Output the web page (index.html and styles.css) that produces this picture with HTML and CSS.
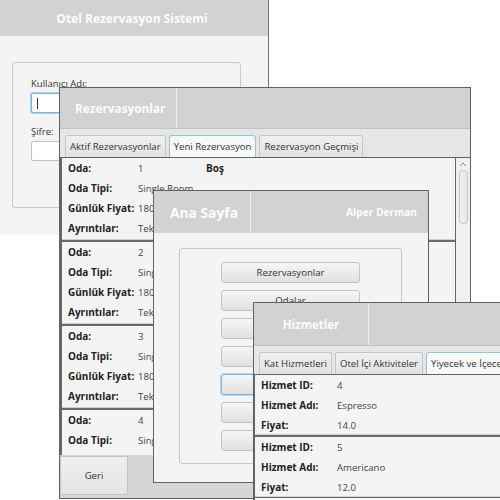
FILE: index.html
```html
<!DOCTYPE html>
<html>
<head>
<meta charset="utf-8">
<link rel="stylesheet" href="styles.css">
</head>
<body>
<div class="desk">

  <section class="win login">
    <header class="login-head">Otel Rezervasyon Sistemi</header>
    <div class="login-body">
      <div class="fieldset login-box">
        <label class="lbl">Kullanıcı Adı:</label>
        <div class="input focus"><span class="caret"></span></div>
        <label class="lbl lbl2">Şifre:</label>
        <div class="input"></div>
      </div>
    </div>
  </section>

  <section class="win rez">
    <header class="head rez-head"><div class="head-title t-rez">Rezervasyonlar</div><div class="head-rest"></div></header>
    <nav class="tabs">
      <span class="tab">Aktif Rezervasyonlar</span>
      <span class="tab sel">Yeni Rezervasyon</span>
      <span class="tab">Rezervasyon Geçmişi</span>
    </nav>
    <div class="rez-main">
      <div class="list">
        <div class="rec">
          <div class="row"><b>Oda:</b><span>1</span><b class="state">Boş</b></div>
          <div class="row"><b>Oda Tipi:</b><span>Single Room</span></div>
          <div class="row"><b>Günlük Fiyat:</b><span>180.0</span></div>
          <div class="row"><b>Ayrıntılar:</b><span>Tek kişilik oda</span></div>
        </div>
        <div class="rec">
          <div class="row"><b>Oda:</b><span>2</span></div>
          <div class="row"><b>Oda Tipi:</b><span>Single Room</span></div>
          <div class="row"><b>Günlük Fiyat:</b><span>180.0</span></div>
          <div class="row"><b>Ayrıntılar:</b><span>Tek kişilik oda</span></div>
        </div>
        <div class="rec">
          <div class="row"><b>Oda:</b><span>3</span></div>
          <div class="row"><b>Oda Tipi:</b><span>Single Room</span></div>
          <div class="row"><b>Günlük Fiyat:</b><span>180.0</span></div>
          <div class="row"><b>Ayrıntılar:</b><span>Tek kişilik oda</span></div>
        </div>
        <div class="rec last">
          <div class="row"><b>Oda:</b><span>4</span></div>
          <div class="row"><b>Oda Tipi:</b><span>Single Room</span></div>
        </div>
      </div>
      <div class="scroll">
        <svg class="arrow" width="8" height="5" viewBox="0 0 8 5"><path d="M1 4 L4 1 L7 4" fill="none" stroke="#888" stroke-width="1"/></svg>
        <div class="thumb"></div>
      </div>
    </div>
    <footer class="rez-foot"><button class="btn geri">Geri</button></footer>
  </section>

  <section class="win ana">
    <header class="head ana-head"><div class="head-title t-ana">Ana Sayfa</div><div class="head-rest user">Alper Derman</div></header>
    <div class="ana-body">
      <div class="fieldset menu">
        <button class="btn mbtn">Rezervasyonlar</button>
        <button class="btn mbtn">Odalar</button>
        <button class="btn mbtn">Hizmetler</button>
        <button class="btn mbtn">Müşteriler</button>
        <button class="btn mbtn focus">Personel</button>
        <button class="btn mbtn">Raporlar</button>
        <button class="btn mbtn">Çıkış</button>
      </div>
    </div>
  </section>

  <section class="win hiz">
    <header class="head hiz-head"><div class="head-title t-hiz">Hizmetler</div><div class="head-rest"></div></header>
    <nav class="tabs hiz-tabs">
      <span class="tab">Kat Hizmetleri</span>
      <span class="tab">Otel İçi Aktiviteler</span>
      <span class="tab sel">Yiyecek ve İçecekler</span>
    </nav>
    <div class="list hlist">
      <div class="rec hrec">
        <div class="row"><b>Hizmet ID:</b><span>4</span></div>
        <div class="row"><b>Hizmet Adı:</b><span>Espresso</span></div>
        <div class="row"><b>Fiyat:</b><span>14.0</span></div>
      </div>
      <div class="rec hrec">
        <div class="row"><b>Hizmet ID:</b><span>5</span></div>
        <div class="row"><b>Hizmet Adı:</b><span>Americano</span></div>
        <div class="row"><b>Fiyat:</b><span>12.0</span></div>
      </div>
    </div>
  </section>

</div>
</body>
</html>
```
FILE: styles.css
```css
* { box-sizing: border-box; }
html, body { margin: 0; padding: 0; background: #ffffff; }
body { font-family: "Open Sans", "Noto Sans", sans-serif; font-size: 10px; color: #333; }
.desk { position: relative; width: 500px; height: 500px; overflow: hidden; }

.win { position: absolute; background: #f4f4f4; display: flex; flex-direction: column; overflow: hidden; }

/* login window */
.login { left: 0; top: 0; width: 269px; height: 235px; border-right: 1px solid #6b7170; }
.login-head { height: 36px; background: #d2d2d2; color: #fcfcfc; font-weight: 700; font-size: 12px; display: flex; align-items: center; justify-content: center; padding-right: 4px; }
.login-body { flex: 1; padding: 26px 27px 0 12px; }
.fieldset { border: 1px solid #c9c9c9; border-radius: 3px; background: #f4f4f4; }
.login-box { height: 146px; padding: 14px 18px; display: flex; flex-direction: column; }
.lbl { font-size: 9.5px; color: #333; line-height: 14px; }
.lbl2 { margin-top: 12px; }
.input { height: 20px; margin-top: 2px; background: #fff; border: 1px solid #c2c2c2; border-radius: 2px; position: relative; }
.input.focus { border: 1px solid #7ab6d8; box-shadow: 0 0 0 1px #a9d2ea; }
.caret { position: absolute; left: 5px; top: 4px; width: 1px; height: 11px; background: #333; }

/* header shared */
.head { display: flex; height: 41px; background: #d2d2d2; flex-shrink: 0; }
.head-title { color: #fcfcfc; font-weight: 700; display: flex; align-items: center; border-right: 1px solid #f2f2f2; }
.head-rest { flex: 1; }

/* reservations window */
.rez { left: 59px; top: 87px; width: 412px; height: 412px; border: 1px solid #5d6462; background: #d6d6d6; }
.rez-head { height: 40px; }
.t-rez { width: 117px; padding-left: 15px; font-size: 11.8px; }
.tabs { height: 29px; background: #e6e6e6; border-top: 1px solid #c2c2c2; display: flex; align-items: flex-end; gap: 3px; padding: 0 0 0 5px; flex-shrink: 0; }
.tab { height: 22px; padding: 0 4px; display: flex; align-items: center; border: 1px solid #c4c4c4; border-bottom: none; border-radius: 3px 3px 0 0; background: linear-gradient(#f0f0f0, #e2e2e2); color: #333; font-size: 9.6px; white-space: nowrap; }
.tab.sel { background: #f8f8f8; border: 1px solid #93c3df; border-bottom: none; }
.rez-main { display: flex; height: 298px; background: #f4f4f4; border-top: 1px solid #5d6462; flex-shrink: 0; }
.list { flex: 1; background: #f4f4f4; border-left: 2px solid #666; border-right: 1px solid #666; overflow: hidden; }
.rec { height: 84px; border-top: 1px solid #6b6b6b; border-bottom: 1px solid #6b6b6b; box-shadow: inset 0 -1px 0 #d0d0d0; padding: 0 0 0 6px; }
.rec:first-child { border-top: none; height: 83px; }
.rec.last { border-bottom: none; box-shadow: none; }
.row { height: 20px; display: flex; align-items: center; white-space: nowrap; }
.row b { width: 70px; font-weight: 700; color: #222; font-size: 10px; }
.row span { width: 68px; color: #444; font-size: 9.6px; }
.row .state { width: auto; }
.scroll { width: 14px; background: #f0f0f0; display: flex; flex-direction: column; align-items: center; padding-top: 4px; gap: 3px; }
.thumb { width: 9px; height: 54px; border: 1px solid #c6c6c6; border-radius: 4px; background: linear-gradient(90deg, #f2f2f2, #e4e4e4); }
.rez-foot { flex: 1; display: flex; background: #d6d6d6; padding: 1px 0 0 0; }
.btn { font-family: "Open Sans", "Noto Sans", sans-serif; font-size: 9.6px; color: #333; border: 1px solid #c4c4c4; border-radius: 3px; background: linear-gradient(#f6f6f6, #e0e0e0); }
.geri { width: 68px; height: 39px; border-radius: 0; background: linear-gradient(#efefef, #e4e4e4); }

/* main window */
.ana { left: 153px; top: 190px; width: 276px; height: 293px; border: 1px solid #5d6462; }
.ana-head { height: 42px; }
.t-ana { width: 97px; padding-left: 16px; font-size: 13.8px; }
.user { color: #fcfcfc; font-weight: 700; font-size: 10.2px; display: flex; align-items: center; justify-content: flex-end; padding-right: 11px; }
.ana-body { padding: 15px 26px 0 25px; }
.menu { height: 216px; padding: 13px 0 0 41px; display: flex; flex-direction: column; gap: 7px; }
.mbtn { width: 139px; height: 21px; padding: 0; }
.mbtn.focus { border: 1px solid #7ab6d8; box-shadow: 0 0 0 1px #b5d8ec; }

/* services window */
.hiz { left: 253px; top: 302px; width: 260px; height: 210px; border: 1px solid #5d6462; }
.hiz-head { height: 42px; }
.t-hiz { width: 115px; justify-content: center; font-size: 11.5px; }
.hiz-tabs { height: 29px; }
.hlist { flex: none; height: 200px; border-top: 1px solid #5d6462; border-left: 1px solid #666; border-right: none; }
.hrec { height: 62px; }
.hrec:first-child { height: 61px; }
.hrec .row b { width: 76px; }
```
